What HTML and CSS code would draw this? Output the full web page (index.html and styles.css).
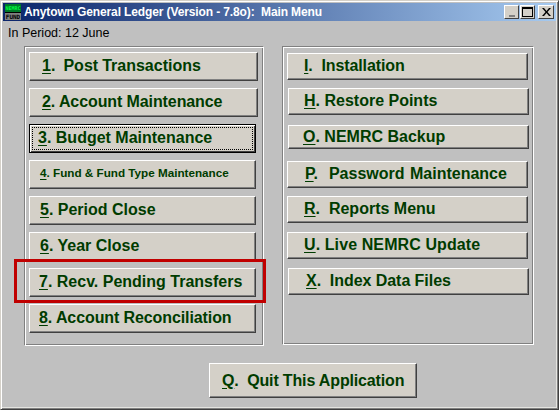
FILE: index.html
```html
<!DOCTYPE html>
<html lang="en">
<head>
    <meta charset="UTF-8">
    <meta name="viewport" content="width=device-width, initial-scale=1.0">
    <title>Anytown General Ledger</title>
    <link rel="stylesheet" href="styles.css">
</head>
<body>
    <div class="window">

        <!-- Title bar -->
        <div class="titlebar">
            <div class="app-icon">
                <span class="icon-top">NEMRC</span>
                <span class="icon-bottom">FUND</span>
            </div>
            <span class="title-text">Anytown General Ledger (Version - 7.8o):  Main Menu</span>
            <div class="win-btn win-min"><span class="min-glyph"></span></div>
            <div class="win-btn win-max"><span class="max-glyph"></span></div>
            <div class="win-btn win-close">
                <svg width="9" height="8" viewBox="0 0 9 8"><path d="M0 0h2l2.500 3 2.500-3h2L5.500 4 9 8H7L4.500 5 2 8H0l3.500-4z" fill="#000"/></svg>
            </div>
        </div>

        <p class="period">In Period: 12 June</p>

        <div class="panels">
            <!-- Left menu -->
            <div class="panel panel-left">
                <div class="btn btn-wide row-1"><u>1</u>.  Post Transactions</div>
                <div class="btn btn-wide row-2 tight"><u>2</u>. Account Maintenance</div>
                <div class="btn btn-focus"><span class="focus-ring"><u>3</u>. Budget Maintenance</span></div>
                <div class="btn btn-small"><u>4</u>. Fund &amp; Fund Type Maintenance</div>
                <div class="btn pad-5"><u>5</u>. Period Close</div>
                <div class="btn pad-5"><u>6</u>. Year Close</div>
                <div class="btn pad-3 highlighted"><u>7</u>. Recv. Pending Transfers<span class="red-box"></span></div>
                <div class="btn pad-3 tight"><u>8</u>. Account Reconciliation</div>
            </div>

            <!-- Right menu -->
            <div class="panel panel-right">
                <div class="btn btn-right tight"><u>I</u>.  Installation</div>
                <div class="btn btn-right shift-1 row-h"><u>H</u>. Restore Points</div>
                <div class="btn btn-right shift-1 row-o"><u>O</u>. NEMRC Backup</div>
                <div class="btn btn-right row-p"><u>P</u>.  Password Maintenance</div>
                <div class="btn btn-right row-r"><u>R</u>.  Reports Menu</div>
                <div class="btn btn-right row-u"><u>U</u>. Live NEMRC Update</div>
                <div class="btn btn-right shift-1 row-x"><u>X</u>.  Index Data Files</div>
            </div>
        </div>

        <div class="footer">
            <div class="btn btn-quit"><u>Q</u>.  Quit This Application</div>
        </div>
    </div>
</body>
</html>
```

FILE: styles.css
```css
* {
    margin: 0;
    padding: 0;
    box-sizing: border-box;
}
html, body {
    width: 559px;
    height: 410px;
    overflow: hidden;
}
body {
    background-color: #c0c0c0;
    font-family: "Liberation Sans", Arial, sans-serif;
}
.window {
    width: 559px;
    height: 410px;
    padding: 3px;
    background-color: #c0c0c0;
    border: 1px solid;
    border-color: #d4d0c8 #404040 #404040 #d4d0c8;
    box-shadow: inset 1px 1px 0 #fff, inset -1px -1px 0 #808080, inset -2px -2px 0 #e4e4e0;
}
.titlebar {
    display: flex;
    align-items: center;
    height: 18px;
    margin: -1px -1px 0 -1px;
    background: linear-gradient(to right, #0a246a, #a6caf0);
}
.app-icon {
    width: 16px;
    height: 16px;
    margin-left: 2px;
    display: flex;
    flex-direction: column;
    flex-shrink: 0;
    overflow: hidden;
    font-family: "DejaVu Sans Mono", monospace;
    text-align: center;
}
.icon-top {
    height: 8px;
    background-color: #007a28;
    color: #00ff40;
    font-size: 5px;
    font-weight: bold;
    line-height: 8px;
}
.icon-bottom {
    height: 8px;
    background-color: #808080;
    border-top: 1px solid #000;
    color: #000;
    font-size: 6px;
    font-weight: bold;
    line-height: 7px;
}
.title-text {
    flex: 1;
    margin-left: 3px;
    color: #fff;
    font-size: 12px;
    font-weight: bold;
    letter-spacing: -0.12px;
    white-space: pre;
}
.win-btn {
    width: 15px;
    height: 14px;
    display: flex;
    align-items: center;
    justify-content: center;
    background-color: #d4d0c8;
    border: 1px solid;
    border-color: #fff #404040 #404040 #fff;
}
.win-max {
    margin: 0 3px 0 1px;
}
.win-close {
    width: 16px;
    margin-right: 2px;
}
.min-glyph {
    width: 6px;
    height: 2px;
    margin-top: 7px;
    background-color: #808080;
}
.max-glyph {
    width: 11px;
    height: 10px;
    border: 1px solid #000;
    border-top-width: 2px;
}
.period {
    margin: 5px 0 0 4px;
    height: 14px;
    font-size: 12.5px;
    line-height: 14px;
    color: #000;
}
.panels {
    display: flex;
    gap: 18px;
    margin: 6px 0 0 20px;
}
.panel {
    height: 300px;
    border: 1px solid;
    border-color: #808080 #fff #fff #808080;
    box-shadow: inset 1px 1px 0 #fff, inset -1px -1px 0 #808080;
    display: flex;
    flex-direction: column;
    align-items: flex-start;
}
.panel-left {
    width: 240px;
    padding: 5px 0 0 4px;
    gap: 7px;
}
.panel-right {
    width: 252px;
    height: 299px;
    padding: 6px 0 0 4px;
}
.btn {
    width: 227px;
    height: 29px;
    padding-left: 11px;
    background-color: #d4d0c8;
    border: 1px solid;
    border-color: #fff #404040 #404040 #fff;
    box-shadow: inset -1px -1px 0 #808080;
    color: #003c00;
    font-size: 16px;
    font-weight: bold;
    line-height: 25px;
    white-space: pre;
}
.btn u {
    text-underline-offset: 2px;
}
.tight {
    letter-spacing: -0.1px;
}
.btn-wide {
    width: 229px;
}
.row-1 {
    padding-left: 12px;
    word-spacing: -0.4px;
}
.row-2 {
    padding-left: 12px;
}
.pad-3 {
    padding-left: 9px;
}
.pad-5 {
    padding-left: 10px;
}
.btn-focus {
    border: 1px solid #000;
    box-shadow: inset 1px 1px 0 #fff, inset -1px -1px 0 #404040;
    padding: 2px;
}
.focus-ring {
    display: block;
    height: 23px;
    padding-left: 5px;
    border: 1px dotted #000;
    line-height: 20px;
}
.btn-small {
    padding-left: 10px;
    font-size: 11.7px;
    line-height: 24px;
}
.highlighted {
    position: relative;
}
.red-box {
    position: absolute;
    left: -16px;
    top: -10px;
    width: 252px;
    height: 44px;
    border: 3px solid #c00000;
}
.btn-right {
    width: 241px;
    height: 27px;
    padding-left: 16px;
    line-height: 23px;
}
.shift-1 {
    margin-left: 1px;
}
.row-h {
    margin-top: 8px;
    padding-left: 15px;
}
.row-o {
    height: 24px;
    margin-top: 10px;
    padding-left: 14px;
    line-height: 22px;
}
.row-p {
    margin-top: 12px;
    padding-left: 17px;
    word-spacing: 1px;
}
.row-r {
    margin-top: 8px;
}
.row-u {
    margin-top: 9px;
    letter-spacing: 0.1px;
}
.row-x {
    margin-top: 9px;
    padding-left: 17px;
    letter-spacing: -0.05px;
}
.footer {
    display: flex;
    margin: 17px 0 0 205px;
}
.btn-quit {
    width: 208px;
    height: 35px;
    padding-left: 12px;
    letter-spacing: -0.15px;
    line-height: 33px;
}
```
